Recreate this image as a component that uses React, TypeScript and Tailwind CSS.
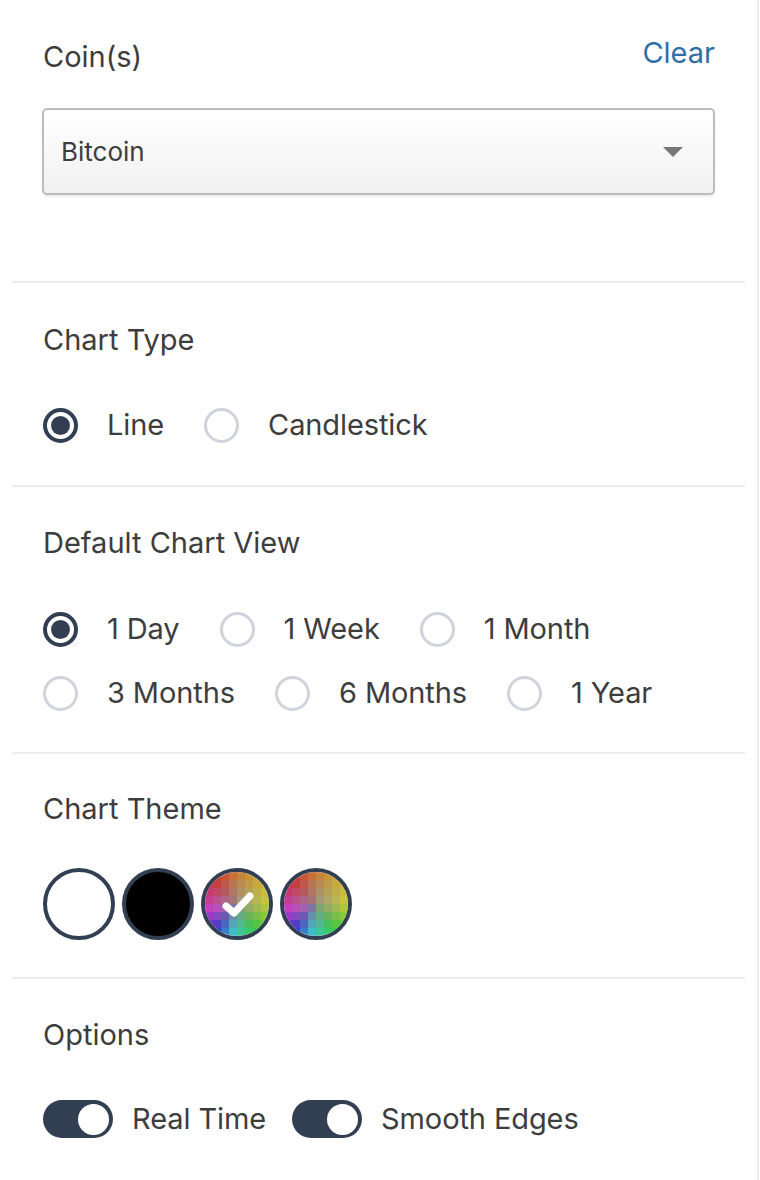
import React from 'react';

const dark = 'bg-[#323f52]';

function hueAt(angle: number) {
    // angle in degrees, 0 = right, clockwise (screen coords)
    const stops: [number, number][] = [
        [-180, 315],
        [-135, 358],
        [-90, 28],
        [-45, 48],
        [0, 62],
        [45, 110],
        [90, 170],
        [135, 250],
        [180, 315],
    ];
    for (let i = 0; i < stops.length - 1; i++) {
        const [a0, h0] = stops[i];
        const [a1, h1] = stops[i + 1];
        if (angle >= a0 && angle <= a1) {
            let d = h1 - h0;
            if (d < -180) d += 360;
            const t = (angle - a0) / (a1 - a0);
            return (h0 + d * t + 360) % 360;
        }
    }
    return 0;
}

function Mosaic() {
    const n = 8;
    const cells = [];
    for (let r = 0; r < n; r++) {
        for (let c = 0; c < n; c++) {
            const x = c + 0.5 - n / 2;
            const y = r + 0.5 - n / 2;
            const dist = Math.min(1, Math.sqrt(x * x + y * y) / (n / 2));
            const angle = (Math.atan2(y, x) * 180) / Math.PI;
            const hue = hueAt(angle);
            const sat = 12 + dist * 48;
            const light = 56 - dist * 6;
            cells.push(
                <rect
                    key={`${r}-${c}`}
                    x={c * 9}
                    y={r * 9}
                    width={9.2}
                    height={9.2}
                    fill={`hsl(${hue}, ${sat}%, ${light}%)`}
                />
            );
        }
    }
    return (
        <svg viewBox="0 0 72 72" className="absolute inset-0 w-full h-full">
            {cells}
        </svg>
    );
}

function Radio({ label, checked }: { label: string; checked?: boolean }) {
    return (
        <div className="flex items-center h-9">
            {checked ? (
                <span className="w-[35px] h-[35px] rounded-full border-[4px] border-[#323f52] bg-white flex items-center justify-center">
                    <span className={`w-[19px] h-[19px] rounded-full ${dark}`} />
                </span>
            ) : (
                <span className="w-[35px] h-[35px] rounded-full border-[3px] border-[#d0d3dc] bg-white" />
            )}
            <span className="ml-[29px] text-[29px] leading-9 tracking-[-0.1px]">{label}</span>
        </div>
    );
}

function Swatch({ kind, selected }: { kind: 'white' | 'black' | 'rainbow'; selected?: boolean }) {
    return (
        <div
            className={`relative w-[72px] h-[72px] rounded-full overflow-hidden border-[4px] border-[#323f52] ${
                kind === 'black' ? 'bg-black' : 'bg-white'
            }`}
        >
            {kind === 'rainbow' && <Mosaic />}
            {selected && (
                <svg viewBox="0 0 64 64" className="absolute inset-0 w-full h-full">
                    <path
                        d="M21 34 L29 41 L45 24"
                        fill="none"
                        stroke="white"
                        strokeWidth="7"
                        strokeLinecap="round"
                        strokeLinejoin="round"
                    />
                </svg>
            )}
        </div>
    );
}

function Toggle({ label }: { label: string }) {
    return (
        <div className="flex items-center">
            <span className={`w-[70px] h-[38px] rounded-full ${dark} flex items-center justify-end pr-[4px]`}>
                <span className="w-[31px] h-[31px] rounded-full bg-white" />
            </span>
            <span className="ml-[19px] text-[29px] leading-9 tracking-[-0.1px]">{label}</span>
        </div>
    );
}

export default function App() {
    return (
        <div
            className="w-[759px] min-h-[1180px] border-r-2 border-[#ececec] bg-white text-[#3d3d3d]"
            style={{ fontFamily: 'Inter, "Liberation Sans", sans-serif' }}
        >
            <div className="mx-3">
                <section className="px-[31px] pt-[39px] pb-[86px] border-b-2 border-[#ececec]">
                    <div className="flex items-center justify-between h-9">
                        <span className="text-[29px] leading-9">Coin(s)</span>
                        <button className="-mr-[1px] -mt-[8px] text-[29px] leading-9 text-[#2f6fa7]">Clear</button>
                    </div>
                    <div className="-mx-[1px] mt-[33px] h-[87px] rounded-[5px] border-2 border-[#bdbdbd] bg-gradient-to-b from-white to-[#f1f1f1] shadow-[0_2px_2px_rgba(0,0,0,0.08)] flex items-center justify-between pl-[17px] pr-[30px]">
                        <span className="text-[26px]">Bitcoin</span>
                        <svg width="20" height="10" viewBox="0 0 20 10">
                            <path d="M0 0 L20 0 L10 10 Z" fill="#777" />
                        </svg>
                    </div>
                </section>

                <section className="px-[31px] pt-[39px] pb-[42px] border-b-2 border-[#ececec]">
                    <div className="text-[29px] leading-9">Chart Type</div>
                    <div className="mt-[49px] flex gap-x-10">
                        <Radio label="Line" checked />
                        <Radio label="Candlestick" />
                    </div>
                </section>

                <section className="px-[31px] pt-[38px] pb-[41px] border-b-2 border-[#ececec]">
                    <div className="text-[29px] leading-9">Default Chart View</div>
                    <div className="mt-[50px] flex gap-x-10">
                        <Radio label="1 Day" checked />
                        <Radio label="1 Week" />
                        <Radio label="1 Month" />
                    </div>
                    <div className="mt-[28px] flex gap-x-10">
                        <Radio label="3 Months" />
                        <Radio label="6 Months" />
                        <Radio label="1 Year" />
                    </div>
                </section>

                <section className="px-[31px] pt-[37px] pb-[37px] border-b-2 border-[#ececec]">
                    <div className="text-[29px] leading-9">Chart Theme</div>
                    <div className="mt-[41px] flex gap-[7px]">
                        <Swatch kind="white" />
                        <Swatch kind="black" />
                        <Swatch kind="rainbow" selected />
                        <Swatch kind="rainbow" />
                    </div>
                </section>

                <section className="px-[31px] pt-[38px] pb-[40px]">
                    <div className="text-[29px] leading-9">Options</div>
                    <div className="mt-[47px] flex gap-x-[26px]">
                        <Toggle label="Real Time" />
                        <Toggle label="Smooth Edges" />
                    </div>
                </section>
            </div>
        </div>
    );
}
